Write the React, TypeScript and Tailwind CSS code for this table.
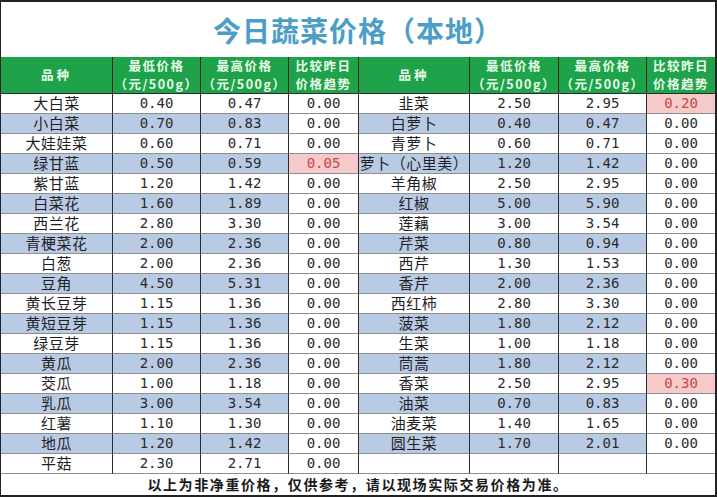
type Item = { name: string; low: string; high: string; diff: string; up?: boolean }

const leftItems: Item[] = [
  { name: '大白菜', low: '0.40', high: '0.47', diff: '0.00' },
  { name: '小白菜', low: '0.70', high: '0.83', diff: '0.00' },
  { name: '大娃娃菜', low: '0.60', high: '0.71', diff: '0.00' },
  { name: '绿甘蓝', low: '0.50', high: '0.59', diff: '0.05', up: true },
  { name: '紫甘蓝', low: '1.20', high: '1.42', diff: '0.00' },
  { name: '白菜花', low: '1.60', high: '1.89', diff: '0.00' },
  { name: '西兰花', low: '2.80', high: '3.30', diff: '0.00' },
  { name: '青梗菜花', low: '2.00', high: '2.36', diff: '0.00' },
  { name: '白葱', low: '2.00', high: '2.36', diff: '0.00' },
  { name: '豆角', low: '4.50', high: '5.31', diff: '0.00' },
  { name: '黄长豆芽', low: '1.15', high: '1.36', diff: '0.00' },
  { name: '黄短豆芽', low: '1.15', high: '1.36', diff: '0.00' },
  { name: '绿豆芽', low: '1.15', high: '1.36', diff: '0.00' },
  { name: '黄瓜', low: '2.00', high: '2.36', diff: '0.00' },
  { name: '茭瓜', low: '1.00', high: '1.18', diff: '0.00' },
  { name: '乳瓜', low: '3.00', high: '3.54', diff: '0.00' },
  { name: '红薯', low: '1.10', high: '1.30', diff: '0.00' },
  { name: '地瓜', low: '1.20', high: '1.42', diff: '0.00' },
  { name: '平菇', low: '2.30', high: '2.71', diff: '0.00' },
]

const rightItems: Item[] = [
  { name: '韭菜', low: '2.50', high: '2.95', diff: '0.20', up: true },
  { name: '白萝卜', low: '0.40', high: '0.47', diff: '0.00' },
  { name: '青萝卜', low: '0.60', high: '0.71', diff: '0.00' },
  { name: '萝卜（心里美）', low: '1.20', high: '1.42', diff: '0.00' },
  { name: '羊角椒', low: '2.50', high: '2.95', diff: '0.00' },
  { name: '红椒', low: '5.00', high: '5.90', diff: '0.00' },
  { name: '莲藕', low: '3.00', high: '3.54', diff: '0.00' },
  { name: '芹菜', low: '0.80', high: '0.94', diff: '0.00' },
  { name: '西芹', low: '1.30', high: '1.53', diff: '0.00' },
  { name: '香芹', low: '2.00', high: '2.36', diff: '0.00' },
  { name: '西红柿', low: '2.80', high: '3.30', diff: '0.00' },
  { name: '菠菜', low: '1.80', high: '2.12', diff: '0.00' },
  { name: '生菜', low: '1.00', high: '1.18', diff: '0.00' },
  { name: '茼蒿', low: '1.80', high: '2.12', diff: '0.00' },
  { name: '香菜', low: '2.50', high: '2.95', diff: '0.30', up: true },
  { name: '油菜', low: '0.70', high: '0.83', diff: '0.00' },
  { name: '油麦菜', low: '1.40', high: '1.65', diff: '0.00' },
  { name: '圆生菜', low: '1.70', high: '2.01', diff: '0.00' },
]

function HeadCell({ lines, last, wide }: { lines: string[]; last?: boolean; wide?: boolean }) {
  return (
    <div
      className={`flex flex-col items-center justify-center h-[37px] bg-[#1ea34b] text-[#ebfbea] font-bold text-[12.5px] leading-[18px] border-b border-b-[#2a2a2a] whitespace-nowrap ${
        last ? '' : 'border-r border-r-[#2a2a2a]'
      } ${wide ? 'tracking-[3px]' : 'tracking-[1.5px]'}`}
    >
      {lines.map((l) => (
        <span key={l} className="block h-[18px]">
          {l}
        </span>
      ))}
    </div>
  )
}

function Cells({ item, blue, last }: { item?: Item; blue: boolean; last?: boolean }) {
  const bg = blue && item ? 'bg-[#b9cbe4]' : 'bg-white'
  const base = 'h-[20px] flex items-center justify-center border-b border-b-[#8e8e8e]'
  const num = "font-['DejaVu_Sans_Mono',monospace] text-[14px] text-[#2b2b2b]"
  return (
    <>
      <div className={`${base} ${bg} border-r border-r-[#2a2a2a] text-[15px] tracking-[0.5px] text-[#1f1f1f] whitespace-nowrap`}>
        {item?.name}
      </div>
      <div className={`${base} ${bg} border-r border-r-[#2a2a2a] ${num}`}>{item?.low}</div>
      <div className={`${base} ${bg} border-r border-r-[#2a2a2a] ${num}`}>{item?.high}</div>
      <div
        className={`${base} ${last ? '' : 'border-r border-r-[#2a2a2a]'} ${
          item?.up ? 'bg-[#f6caca] text-[#c44848]' : 'bg-white text-[#2b2b2b]'
        } font-['DejaVu_Sans_Mono',monospace] text-[14px]`}
      >
        {item?.diff}
      </div>
    </>
  )
}

function Row({ left, right, blue }: { left: Item; right?: Item; blue: boolean }) {
  return (
    <>
      <Cells item={left} blue={blue} />
      <Cells item={right} blue={blue} last />
    </>
  )
}

export default function App() {
  const head = [
    { lines: ['品种'], wide: true },
    { lines: ['最低价格', '（元/500g）'] },
    { lines: ['最高价格', '（元/500g）'] },
    { lines: ['比较昨日', '价格趋势'] },
  ]

  return (
    <div className="w-[717px] h-[497px] bg-white border-t-2 border-r-2 border-b-2 border-l border-[#222] font-['Noto_Sans_CJK_SC','Noto_Sans',sans-serif] overflow-hidden">
      <div className="h-[55px] flex items-center justify-center text-[28px] font-bold tracking-[1px] text-[#4c9ec6]">
        今日蔬菜价格（本地）
      </div>

      <div className="grid grid-cols-[112px_88px_88px_70px_111px_89px_88px_68px]">
        {head.map((h) => (
          <HeadCell key={'l' + h.lines[0]} lines={h.lines} wide={h.wide} />
        ))}
        {head.map((h, i) => (
          <HeadCell key={'r' + h.lines[0]} lines={h.lines} wide={h.wide} last={i === 3} />
        ))}

        {leftItems.map((item, i) => (
          <Row key={item.name} left={item} right={rightItems[i]} blue={i % 2 === 1} />
        ))}
      </div>

      <div className="h-[21px] flex items-center justify-center text-[14px] font-bold tracking-[1.6px] text-[#1a1a1a]">
        以上为非净重价格，仅供参考，请以现场实际交易价格为准。
      </div>
    </div>
  )
}
